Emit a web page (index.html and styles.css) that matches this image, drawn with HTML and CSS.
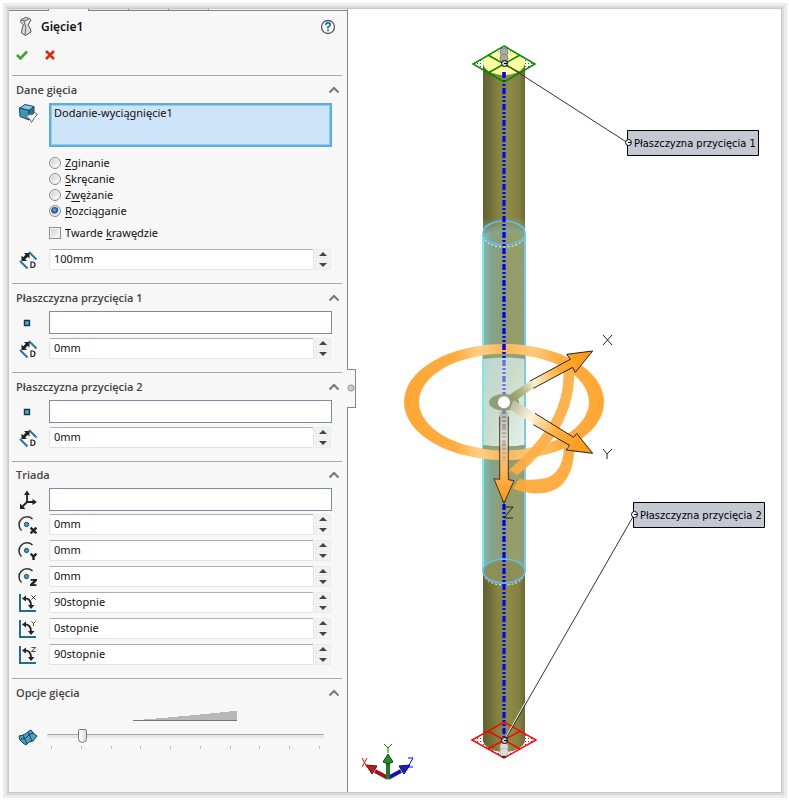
FILE: index.html
```html
<!DOCTYPE html>
<html lang="pl">
<head>
  <meta charset="UTF-8" />
  <meta name="viewport" content="width=device-width, initial-scale=1.0"/>
  <title>Gięcie1</title>

  <!-- Styles -->
  <link rel="stylesheet" href="styles.css">
</head>
<body>
  <!-- Shared icons -->
  <svg class="sprite" aria-hidden="true">
    <symbol id="chevron" viewBox="0 0 12 8">
      <path d="M1.500 6.500 6 2l4.500 4.500" fill="none" stroke="#777" stroke-width="2"/>
    </symbol>
    <symbol id="distance" viewBox="0 0 20 20">
      <path d="M11 2l7.500 7.500M2 11l7.500 7.500" stroke="#2b7595" stroke-width="2" fill="none"/>
      <path d="M5 9.500 10 4.500" stroke="#222" stroke-width="3"/>
      <path d="M3.500 11V5.500L9 11zM11.500 3v5.500L6 3z" fill="#222"/>
      <path d="M13 12v5.500h1.500q2.500-.3 2.500-2.700t-2.500-2.800z" fill="none" stroke="#222" stroke-width="1.200"/>
    </symbol>
    <symbol id="point" viewBox="0 0 20 20">
      <path d="M6.500 7.500h5v5h-5z" fill="#55a5c5" stroke="#0c3c55" stroke-width="1.400"/>
    </symbol>
    <symbol id="arc" viewBox="0 0 20 20">
      <path d="M3.500 15.500A7.500 7.500 0 0 1 14.500 4" fill="none" stroke="#333" stroke-width="1.600"/>
      <circle cx="8.500" cy="9.500" r="2.200" fill="#3d9dc4" stroke="#1d5672"/>
    </symbol>
    <symbol id="angle" viewBox="0 0 20 20">
      <path d="M2 1v17h16" fill="none" stroke="#226c94" stroke-width="2"/>
      <path d="M6 5.500q7-.5 7 7" fill="none" stroke="#222" stroke-width="1.800"/>
      <path d="M4 5.500l4-3v6zM10 12h6.500L13 16z" fill="#222"/>
    </symbol>
    <symbol id="lx" viewBox="0 0 6 6"><path d="M.5.5l5 5M5.500.5l-5 5" fill="none" stroke="#222"/></symbol>
    <symbol id="ly" viewBox="0 0 6 6"><path d="M.5.5 3 3 5.500.5M3 3v3" fill="none" stroke="#222"/></symbol>
    <symbol id="lz" viewBox="0 0 6 6"><path d="M.5.5h5l-5 5h5" fill="none" stroke="#222"/></symbol>
  </svg>

  <main class="window">
    <form class="panel">
      <div class="tabs"><span></span><span></span><span></span><span></span><span></span></div>

      <header class="title">
        <svg class="icon" viewBox="0 0 20 20">
          <path d="M4 2.500 9 .5l3.500 1L14 3l-3 5 2.500 4 .5 3-5.500 3.500L4.500 16l.5-4 1.500-4L3.500 5z" fill="#ddd" stroke="#555"/>
          <path d="M4 3q4 2 8-1M7 4q3 6 1 14" fill="none" stroke="#666"/>
          <path d="M9.500 4.500 12 3.500 10 8z" fill="#fff"/>
        </svg>
        <h1>Gięcie1</h1>
        <button type="button" class="plain help" aria-label="Pomoc">
          <svg width="16" height="16" viewBox="0 0 16 16">
            <circle cx="8" cy="8" r="6.500" fill="#fff" stroke="#555" stroke-width="1.300"/>
            <path d="M5.700 6q0-2 2.300-2t2.300 1.800Q10.300 7.200 8 8v1.500M8 10.500v1.800" fill="none" stroke="#1d78a8" stroke-width="1.800"/>
          </svg>
        </button>
      </header>

      <div class="actions">
        <button type="button" class="plain" aria-label="OK">
          <svg width="12" height="10" viewBox="0 0 12 10"><path d="M1 5l3.500 3.500L11 1.500" fill="none" stroke="#40a528" stroke-width="2.600"/></svg>
        </button>
        <button type="button" class="plain" aria-label="Anuluj">
          <svg width="10" height="10" viewBox="0 0 10 10"><path d="M1 1l8 8M9 1 1 9" fill="none" stroke="#dc2a06" stroke-width="2.500"/></svg>
        </button>
      </div>

      <!-- Dane gięcia -->
      <section>
        <h2>Dane gięcia <button type="button" class="plain" aria-label="Zwiń"><svg class="chevron"><use href="#chevron"/></svg></button></h2>
        <div class="row top">
          <svg class="icon" viewBox="0 0 20 20">
            <path d="M1.500 5 7 1.500l9 2-5 4z" fill="#83c9df" stroke="#164a60"/>
            <path d="M1.500 5l9.500 2.500v9.500L2 13.500z" fill="#3d94b5" stroke="#164a60"/>
            <path d="M11 7.500l5-4v9l-5 4.500z" fill="#27718f" stroke="#164a60"/>
            <path d="M8.500 13.500 12 11l2 1 2.500-2.500 3 2-3 3-3 5-1.500-3z" fill="#f5f5f5" stroke="#666"/>
          </svg>
          <textarea class="selection active" aria-label="Obiekty do zgięcia" readonly>Dodanie-wyciągnięcie1</textarea>
        </div>
        <div class="options">
          <label><input type="radio" name="type"><span><u>Z</u>ginanie</span></label>
          <label><input type="radio" name="type"><span><u>S</u>kręcanie</span></label>
          <label><input type="radio" name="type"><span>Z<u>w</u>ężanie</span></label>
          <label><input type="radio" name="type" checked><span><u>R</u>ozciąganie</span></label>
          <label class="check"><input type="checkbox"><span>Twarde <u>k</u>rawędzie</span></label>
        </div>
        <div class="row">
          <svg class="icon"><use href="#distance"/></svg>
          <input class="value" type="text" value="100mm" aria-label="Odległość rozciągania">
          <div class="spin"><button type="button" aria-label="Więcej"></button><button type="button" aria-label="Mniej"></button></div>
        </div>
      </section>

      <!-- Płaszczyzna przycięcia 1 -->
      <section>
        <h2>Płaszczyzna przycięcia 1 <button type="button" class="plain" aria-label="Zwiń"><svg class="chevron"><use href="#chevron"/></svg></button></h2>
        <div class="row">
          <svg class="icon"><use href="#point"/></svg>
          <input class="selection" type="text" aria-label="Obiekt odniesienia 1">
        </div>
        <div class="row">
          <svg class="icon"><use href="#distance"/></svg>
          <input class="value" type="text" value="0mm" aria-label="Odległość przycięcia 1">
          <div class="spin"><button type="button" aria-label="Więcej"></button><button type="button" aria-label="Mniej"></button></div>
        </div>
      </section>

      <!-- Płaszczyzna przycięcia 2 -->
      <section>
        <h2>Płaszczyzna przycięcia 2 <button type="button" class="plain" aria-label="Zwiń"><svg class="chevron"><use href="#chevron"/></svg></button></h2>
        <div class="row">
          <svg class="icon"><use href="#point"/></svg>
          <input class="selection" type="text" aria-label="Obiekt odniesienia 2">
        </div>
        <div class="row">
          <svg class="icon"><use href="#distance"/></svg>
          <input class="value" type="text" value="0mm" aria-label="Odległość przycięcia 2">
          <div class="spin"><button type="button" aria-label="Więcej"></button><button type="button" aria-label="Mniej"></button></div>
        </div>
      </section>

      <!-- Triada -->
      <section class="triad">
        <h2>Triada <button type="button" class="plain" aria-label="Zwiń"><svg class="chevron"><use href="#chevron"/></svg></button></h2>
        <div class="row">
          <svg class="icon" viewBox="0 0 20 20">
            <path d="M9 3v9h8M9 12l-5 5" fill="none" stroke="#222" stroke-width="1.800"/>
            <path d="M9 .5l3 4.500H6zM19 12l-4.500 3V9zM2 19v-5.500L7.500 19z" fill="#222"/>
          </svg>
          <input class="selection" type="text" aria-label="Układ współrzędnych">
        </div>
        <div class="row">
          <svg class="icon"><use href="#arc"/><use class="bold" href="#lx" x="12" y="12" width="7" height="7"/></svg>
          <input class="value" type="text" value="0mm" aria-label="Początek obrotu X">
          <div class="spin"><button type="button" aria-label="Więcej"></button><button type="button" aria-label="Mniej"></button></div>
        </div>
        <div class="row">
          <svg class="icon"><use href="#arc"/><use class="bold" href="#ly" x="12" y="12" width="7" height="7"/></svg>
          <input class="value" type="text" value="0mm" aria-label="Początek obrotu Y">
          <div class="spin"><button type="button" aria-label="Więcej"></button><button type="button" aria-label="Mniej"></button></div>
        </div>
        <div class="row">
          <svg class="icon"><use href="#arc"/><use class="bold" href="#lz" x="12" y="12" width="7" height="7"/></svg>
          <input class="value" type="text" value="0mm" aria-label="Początek obrotu Z">
          <div class="spin"><button type="button" aria-label="Więcej"></button><button type="button" aria-label="Mniej"></button></div>
        </div>
        <div class="row">
          <svg class="icon"><use href="#angle"/><use href="#lx" x="13" y="2" width="5" height="5"/></svg>
          <input class="value" type="text" value="90stopnie" aria-label="Kąt obrotu X">
          <div class="spin"><button type="button" aria-label="Więcej"></button><button type="button" aria-label="Mniej"></button></div>
        </div>
        <div class="row">
          <svg class="icon"><use href="#angle"/><use href="#ly" x="13" y="2" width="5" height="5"/></svg>
          <input class="value" type="text" value="0stopnie" aria-label="Kąt obrotu Y">
          <div class="spin"><button type="button" aria-label="Więcej"></button><button type="button" aria-label="Mniej"></button></div>
        </div>
        <div class="row">
          <svg class="icon"><use href="#angle"/><use href="#lz" x="13" y="2" width="5" height="5"/></svg>
          <input class="value" type="text" value="90stopnie" aria-label="Kąt obrotu Z">
          <div class="spin"><button type="button" aria-label="Więcej"></button><button type="button" aria-label="Mniej"></button></div>
        </div>
      </section>

      <!-- Opcje gięcia -->
      <section>
        <h2>Opcje gięcia <button type="button" class="plain" aria-label="Zwiń"><svg class="chevron"><use href="#chevron"/></svg></button></h2>
        <svg class="wedge" width="104" height="10" viewBox="0 0 104 10">
          <path d="M0 9h11V8h12V7h12V6h10V5h12V4h10V3h10V2h10V1h9V0h8v9z" fill="#b8b8b8"/>
          <path d="M0 9.500h104" stroke="#777"/>
        </svg>
        <div class="row slider">
          <svg class="icon" viewBox="0 0 20 20">
            <path d="M1 8l4-1q3-1 6-4l2-1 2 3 4 3-4 5-4 1-3 3-3-2-3-3z" fill="#4f9fc0" stroke="#12445e" stroke-linejoin="round"/>
            <path d="M3 11q5 0 7-3t6-3M5 7l4 9M10 4l4 9" fill="none" stroke="#12445e"/>
          </svg>
          <div class="scale">
            <input type="range" min="0" max="9" value="1" aria-label="Dokładność">
            <div class="ticks"><i></i><i></i><i></i><i></i><i></i><i></i><i></i><i></i><i></i><i></i></div>
          </div>
        </div>
      </section>
    </form>

    <div class="viewport">
      <button type="button" class="handle" aria-label="Zwiń panel"></button>
      <svg class="scene" viewBox="348 9 433 783">
        <defs>
          <linearGradient id="rod">
            <stop offset="0" stop-color="#626030"/><stop offset=".18" stop-color="#706e38"/>
            <stop offset=".35" stop-color="#85843f"/><stop offset=".6" stop-color="#8c8b47"/>
            <stop offset=".85" stop-color="#85823f"/><stop offset="1" stop-color="#6c6937"/>
          </linearGradient>
          <linearGradient id="glass">
            <stop offset="0" stop-color="#86bcb4"/><stop offset=".2" stop-color="#84a48c"/>
            <stop offset=".55" stop-color="#909c69"/><stop offset=".85" stop-color="#96a068"/>
            <stop offset="1" stop-color="#879c85"/>
          </linearGradient>
          <linearGradient id="light" x1="0" y1="0" x2="1" y2="1">
            <stop offset="0" stop-color="#b8d8d4"/><stop offset=".5" stop-color="#cddccb"/>
            <stop offset="1" stop-color="#e3f3ee"/>
          </linearGradient>
          <linearGradient id="fade" x1="0" y1="0" x2="0" y2="1">
            <stop offset="0" stop-color="#85ad9b" stop-opacity="0"/><stop offset="1" stop-color="#85ad9b"/>
          </linearGradient>
          <linearGradient id="ring" gradientUnits="userSpaceOnUse" x1="404" y1="0" x2="604" y2="0">
            <stop offset="0" stop-color="#ffa733"/><stop offset=".26" stop-color="#ffad43"/>
            <stop offset=".38" stop-color="#ffd083"/><stop offset=".5" stop-color="#fcb456"/>
            <stop offset=".64" stop-color="#ffcb7b"/><stop offset=".78" stop-color="#ffad43"/>
            <stop offset="1" stop-color="#ffa733"/>
          </linearGradient>
          <linearGradient id="arrowX" gradientUnits="userSpaceOnUse" x1="360" y1="235" x2="608" y2="93">
            <stop offset="0" stop-color="#8f9a68"/><stop offset=".15" stop-color="#b0b581"/>
            <stop offset=".3" stop-color="#fff0cf"/><stop offset=".6" stop-color="#ffaa33"/>
            <stop offset="1" stop-color="#ff9410"/>
          </linearGradient>
          <linearGradient id="arrowY" gradientUnits="userSpaceOnUse" x1="360" y1="255" x2="608" y2="400">
            <stop offset="0" stop-color="#b3bc9d"/><stop offset=".25" stop-color="#fff3d8"/>
            <stop offset=".55" stop-color="#ffae3d"/><stop offset="1" stop-color="#ff9410"/>
          </linearGradient>
          <linearGradient id="arrowZ" gradientUnits="userSpaceOnUse" x1="0" y1="270" x2="0" y2="550">
            <stop offset="0" stop-color="#8a956b" stop-opacity=".5"/><stop offset=".3" stop-color="#ead6b1" stop-opacity=".6"/>
            <stop offset=".6" stop-color="#fdb95e"/><stop offset="1" stop-color="#ff9410"/>
          </linearGradient>
          <pattern id="greenDots" width="3" height="3" patternUnits="userSpaceOnUse"><path d="M0 0h1v1H0z" fill="#080"/></pattern>
          <pattern id="redDots" width="3" height="3" patternUnits="userSpaceOnUse"><path d="M0 0h1v1H0z" fill="red"/></pattern>
        </defs>

        <!-- Rod -->
        <path d="M504 46l31 18-31 18-31-18z" fill="url(#greenDots)"/>
        <path d="M504 722l32 18-32 18-32-18z" fill="url(#redDots)"/>
        <path d="M483 63h42v677a21 12 0 0 1-42 0z" fill="url(#rod)"/>
        <ellipse cx="504" cy="63" rx="21" ry="12" fill="#ffffa0"/>
        <path d="M483 218h42v17h-42z" fill="url(#fade)"/>
        <path d="M483 233h42v339a21 12 0 0 1-42 0z" fill="url(#glass)"/>
        <path d="M483 572a21 12 0 0 1 42 0a21 12 0 0 1-42 0z" fill="#8b9058"/>
        <path d="M483 358q21-3 42 0v87q-21 3-42 0z" fill="url(#light)"/>
        <path d="M483 234v338" stroke="#7de8ef" stroke-width="2"/>
        <path d="M525 234v338" stroke="#7cc6f2" stroke-width="2"/>
        <g fill="none" stroke="#66bdf5" stroke-width="1.500">
          <ellipse cx="504" cy="233" rx="21" ry="12"/>
          <ellipse cx="504" cy="571" rx="21" ry="12"/>
        </g>
        <path d="M485 240q6 7 19 7t19-7M485 578q6 7 19 7t19-7" fill="none" stroke="#fff" stroke-dasharray="2 2"/>

        <!-- Rotation rings -->
        <path d="M404 402a100 58 0 0 1 200 0a100 58 0 0 1-200 0zM419 402a85 48 0 0 0 170 0a85 48 0 0 0-170 0z" fill="url(#ring)"/>
        <path d="M483 355q21-2 42 0v4q-21-3-42 0zM483 445q21 3 42 0v4q-21 3-42 0z" fill="#8fa37a"/>
        <g transform="translate(390 320) scale(.33333)">
          <path d="M553 150Q555 265 486 360Q435 425 375 472L355 452Q430 388 472 322Q525 240 520 150z" fill="#ffad43" fill-opacity=".93"/>
          <path d="M553 390Q550 458 516 494Q465 540 368 506L388 477Q430 483 470 474Q520 455 522 380z" fill="#ffaa3b" fill-opacity=".95"/>
          <path d="M360 450l30 22-25 22z" fill="#95a373"/>
        </g>

        <!-- Axis -->
        <path d="M504 72v665" stroke="#6d6ea0" stroke-width="4" stroke-dasharray="6 2 2 2 2 2"/>
        <path d="M504 72v665" stroke="#00f" stroke-width="3" stroke-dasharray="6 2 2 2 2 2"/>
        <path d="M501 360h6v84h-6z" fill="#d5e1e0" fill-opacity=".5"/>

        <!-- Arrows -->
        <g transform="translate(390 320) scale(.33333)" stroke-width="3">
          <ellipse cx="342" cy="247" rx="45" ry="25" fill="#8f9e74"/>
          <path d="M362 222l58-39 121-65-11-15 78-10-52 64-8-15-118 63-60 42z" fill="url(#arrowX)"/>
          <path d="M420 183l121-65-11-15 78-10-52 64-8-15-118 63" fill="none" stroke="#222"/>
          <path d="M370 240l30 18 151 94 9-12 48 60-80-10 11-14-149-88-30-20z" fill="url(#arrowY)"/>
          <path d="M435 280l116 72 9-12 48 60-80-10 11-14-109-62" fill="none" stroke="#222"/>
          <path d="M329 275h26v204l17 3-30 68-30-74 17 2z" fill="url(#arrowZ)"/>
          <path d="M355 290v189l17 3-30 68-30-74 17 2V290" fill="none" stroke="#222" stroke-opacity=".85"/>
          <circle cx="342" cy="247" r="18" fill="#fff"/>
        </g>
        <g fill="none" stroke="#222">
          <path d="M603 335l9 10M612 335l-9 10M603 449l4 5 5-5M607 454v5M504 507h9l-9 11h9"/>
        </g>

        <!-- Trim plane 1 -->
        <path d="M504 46l31 18-31 18-31-18zM488 55l32 18M520 55l-32 18" fill="none" stroke="#080" stroke-width="1.500"/>
        <g fill="#aaa" stroke="#888"><circle cx="504" cy="52" r="4"/><circle cx="504" cy="58" r="4"/></g>
        <path d="M505 64l123 79" stroke="#333"/>

        <!-- Trim plane 2 -->
        <path d="M504 722l32 18-32 18-32-18zM488 731l32 18M520 731l-32 18" fill="none" stroke="red" stroke-width="1.500"/>
        <g fill="#ddd" stroke="#bbb"><circle cx="504" cy="747" r="4"/><circle cx="504" cy="752" r="4"/></g>
        <path d="M502 756h4v2h-4z" fill="#333"/>
        <path d="M506 737l19-34" stroke="#fff"/>
        <path d="M505 740l129-225" stroke="#333"/>

        <!-- Callouts -->
        <g fill="#c4c8d3" stroke="#000">
          <path d="M627.500 130.500h131v25h-131zM633.500 502.500h131v25h-131z"/>
        </g>
        <g fill="#fff" stroke="#000">
          <circle cx="628.500" cy="142.500" r="3"/><circle cx="634.500" cy="514.500" r="3"/>
          <circle cx="504.500" cy="63.500" r="3" fill="#ccc"/><circle cx="504.500" cy="740.500" r="3" fill="#ccc"/>
        </g>
        <path d="M628 142.500h3M634 514.500h3M504 63.500h3M504 740.500h3" stroke="#000"/>
        <text class="callout" x="634" y="147">Płaszczyzna przycięcia 1</text>
        <text class="callout" x="640" y="519">Płaszczyzna przycięcia 2</text>

        <!-- Orientation triad -->
        <path d="M388 778l-13-7" stroke="#a51218" stroke-width="4"/>
        <path d="M366 765l11 1-5 8z" fill="#b81d1d" stroke="#6b1010"/>
        <path d="M388 778l13-7" stroke="#1515a5" stroke-width="4"/>
        <path d="M410 765l-11 1 5 8z" fill="#2020b8" stroke="#10106b"/>
        <path d="M388 779v-19" stroke="#167b22" stroke-width="4"/>
        <path d="M388 754l5 8-5 2-5-2z" fill="#258b30" stroke="#0c4d14"/>
        <g fill="none">
          <path d="M362 758l5 9M367 758l-5 9" stroke="red"/>
          <path d="M384 744l4 4 4-4M388 748v5" stroke="#080"/>
          <path d="M408 758h5l-5 9h5" stroke="#00f"/>
        </g>
      </svg>
    </div>
  </main>
</body>
</html>
```

FILE: styles.css
```css
:root {
  --panel-bg: #f7f7f7;
  --line: #a8a8a8;
  --edge: #858585;
  --font-sans: 'Noto Sans', 'Open Sans', sans-serif;
}

* {
  box-sizing: border-box;
}

body {
  margin: 0;
  padding: 9px 8px 8px 9px;
  min-height: 100vh;
  display: flex;
  background-color: #fdfdfd;
  color: #111;
  font-family: var(--font-sans);
  font-size: 11px;
  line-height: 16px;
}

.sprite {
  position: absolute;
  width: 0;
  height: 0;
}

.window {
  flex: 1;
  display: flex;
  background-color: #fff;
  box-shadow: 0 0 0 1px #c9c9c9, 0 0 0 3px #dadada, 0 0 0 6px #ececec;
}

/* Property panel */
.panel {
  width: 339px;
  background-color: var(--panel-bg);
  border-right: 1px solid var(--edge);
}

.tabs {
  display: flex;
  height: 2px;
  border-bottom: 1px solid var(--edge);
}

.tabs span {
  width: 40px;
  height: 1px;
  background-color: #e4e4e4;
  border-right: 1px solid var(--edge);
}

.tabs span:nth-child(2) {
  height: 2px;
  background-color: var(--panel-bg);
}

.title {
  display: flex;
  align-items: center;
  gap: 4px;
  height: 32px;
  padding: 0 11px 0 8px;
}

h1 {
  flex: 1;
  margin: 0;
  font-size: 12px;
  font-weight: 600;
}

.plain {
  display: flex;
  padding: 0;
  border: 0;
  background: none;
}

.actions {
  display: flex;
  align-items: center;
  gap: 17px;
  height: 23px;
  margin-bottom: 9px;
  padding-left: 7px;
}

section {
  margin: 0 5px 0 3px;
  padding-bottom: 13px;
  border-top: 1px solid var(--line);
}

h2 {
  display: flex;
  align-items: center;
  justify-content: space-between;
  height: 27px;
  margin: 0;
  padding: 0 2px 0 4px;
  color: #444;
  font-family: 'Open Sans', sans-serif;
  font-size: 11px;
  font-weight: 600;
}

.chevron {
  width: 12px;
  height: 8px;
}

.icon {
  flex: none;
  width: 20px;
  height: 20px;
}

.bold {
  stroke-width: 2px;
}

.row {
  display: flex;
  align-items: center;
  margin-bottom: 4px;
  padding: 0 10px 0 6px;
}

.row:last-child {
  margin-bottom: 0;
}

.row.top {
  align-items: flex-start;
  margin-bottom: 8px;
}

.row .icon {
  margin-right: 11px;
}

.selection,
.value {
  flex: 1;
  min-width: 0;
  padding: 0 4px 2px;
  background-color: #fff;
  color: #111;
  font: inherit;
}

.selection {
  height: 23px;
  border: 1px solid #828aa3;
}

.selection.active {
  height: 44px;
  padding: 0 3px;
  border: 2px solid #56aee4;
  outline: 1px solid #99c8f2;
  outline-offset: -3px;
  background-color: #cee4f8;
  resize: none;
}

.value {
  height: 21px;
  border: 1px solid #e2e3ea;
  border-top-color: #abadb3;
  border-radius: 2px;
}

.options label {
  display: flex;
  align-items: center;
  gap: 4px;
  height: 16px;
  padding-left: 37px;
}

.options .check {
  margin: 6px 0 8px;
}

.options input {
  appearance: none;
  width: 12px;
  height: 12px;
  margin: 0;
  border: 1px solid #8e8f8f;
  background: linear-gradient(135deg, #ccc, #fff);
  box-shadow: inset 0 0 0 1px #f4f4f4;
}

.options input[type="radio"] {
  border-radius: 50%;
}

.options input[type="radio"]:checked {
  background: radial-gradient(circle at 45% 40%, #6fc0ee 0, #164a85 3px, #dde 4px);
}

.options u {
  text-underline-offset: 2px;
}

.spin {
  display: flex;
  flex-direction: column;
  gap: 1px;
  width: 16px;
  margin: 0 1px;
}

.spin button {
  display: flex;
  align-items: center;
  justify-content: center;
  height: 10px;
  padding: 0;
  border: 1px solid #ebebeb;
  background-color: #f1f1f1;
}

.spin button::before {
  content: "";
  border: 4px solid transparent;
  border-top-width: 0;
  border-bottom-color: #444;
}

.spin button:last-child::before {
  border-top: 4px solid #444;
  border-bottom-width: 0;
}

.triad h2 {
  height: 26px;
}

.triad .row {
  margin-bottom: 3px;
}

.triad .row + .row {
  margin-bottom: 5px;
}

.triad .row:last-child {
  margin-bottom: 0;
}

/* Accuracy slider */
.wedge {
  display: block;
  margin: 5px auto 7px 121px;
}

.slider {
  align-items: flex-start;
  padding-right: 18px;
}

.slider .icon {
  margin-right: 9px;
}

.scale {
  flex: 1;
}

.scale input {
  appearance: none;
  display: block;
  width: 100%;
  height: 16px;
  margin: 0;
  background: none;
}

.scale input::-webkit-slider-runnable-track {
  height: 4px;
  border: 1px solid #e2e8ee;
  border-top-color: #a3a8b4;
  background-color: #e2e8ee;
}

.scale input::-webkit-slider-thumb {
  appearance: none;
  width: 9px;
  height: 14px;
  margin-top: -6px;
  border: 1px solid #777;
  border-radius: 2px 2px 5px 5px;
  background: linear-gradient(90deg, #fff, #ddd);
}

.ticks {
  display: flex;
  justify-content: space-between;
  padding: 2px 4px 0;
}

.ticks i {
  width: 1px;
  height: 3px;
  background-color: #bbb;
}

/* Graphics area */
.viewport {
  position: relative;
  flex: 1;
  min-width: 0;
}

.scene {
  display: block;
  width: 100%;
  height: 100%;
}

.handle {
  position: absolute;
  top: 46%;
  left: -1px;
  width: 9px;
  height: 39px;
  padding: 0;
  border: 1px solid var(--edge);
  border-left: 0;
  background: radial-gradient(circle at 4px 18px, #ccc 2px, #999 3px, var(--panel-bg) 4px);
}

.callout {
  fill: #000;
  font-family: 'DejaVu Sans Condensed', 'DejaVu Sans', sans-serif;
  font-size: 11px;
}
```
